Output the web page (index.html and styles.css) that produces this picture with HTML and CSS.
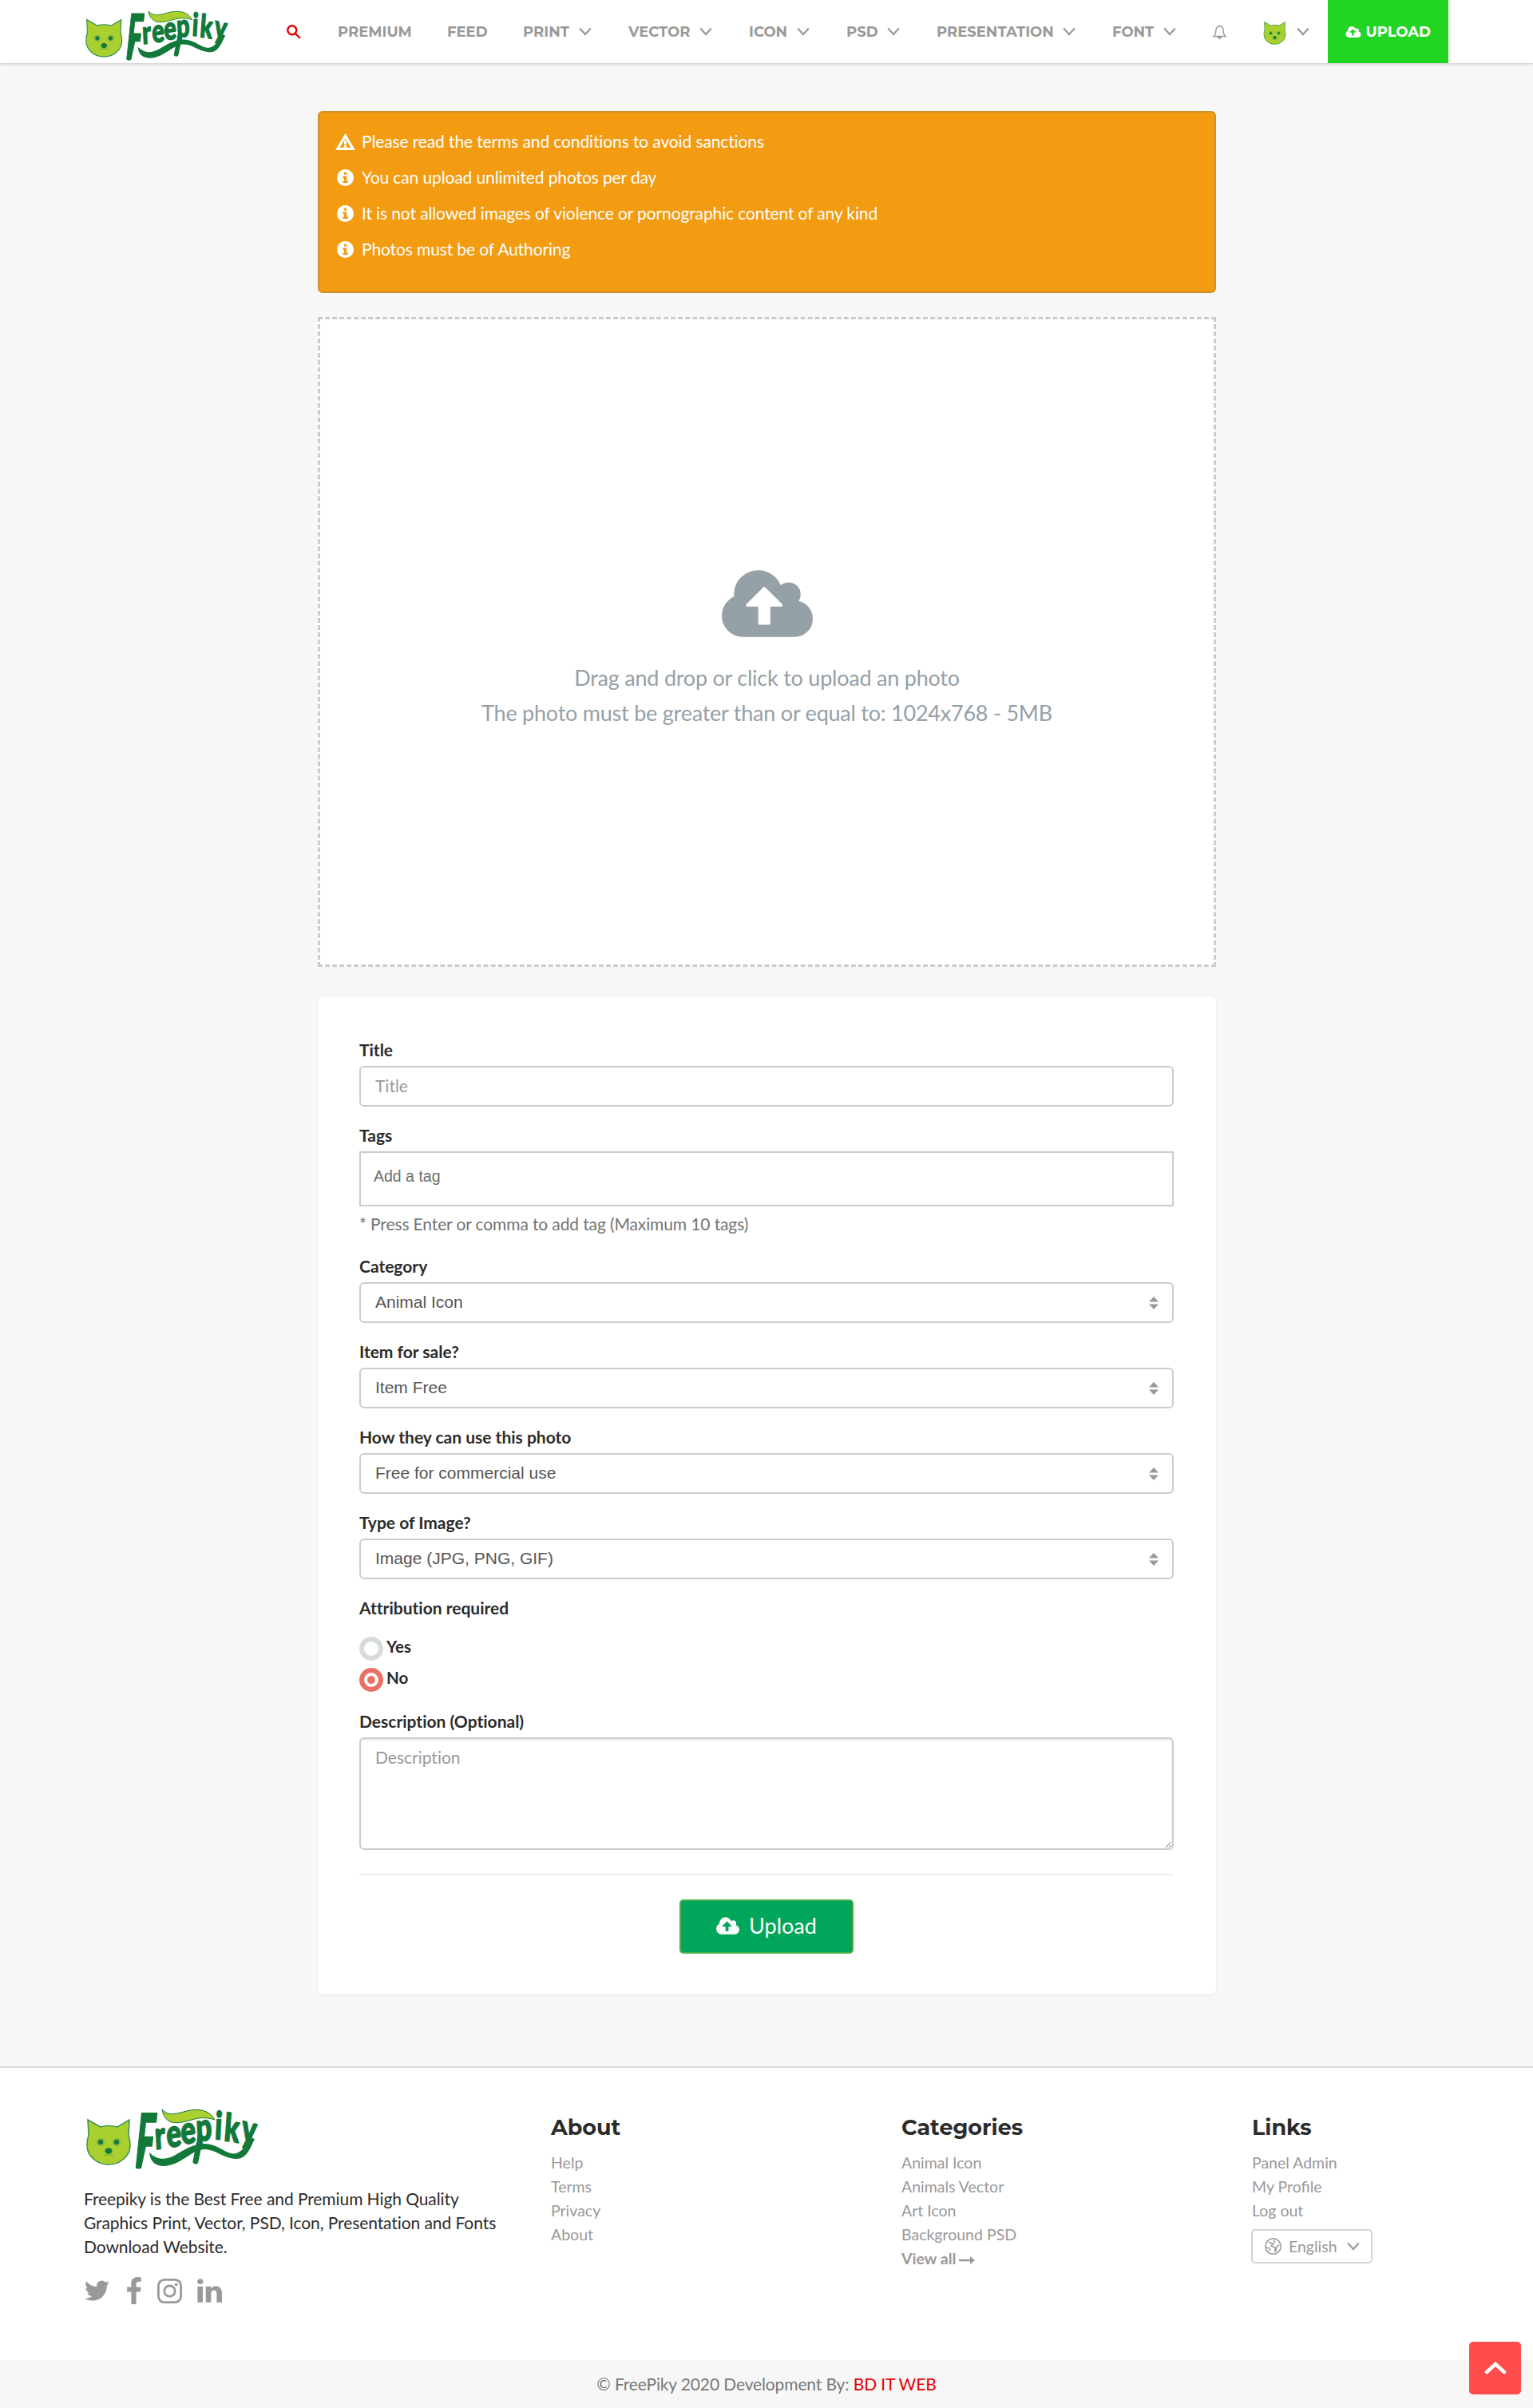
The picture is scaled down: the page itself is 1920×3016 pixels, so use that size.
FILE: index.html
```html
<!DOCTYPE html>
<html lang="en">
<head>
    <meta charset="UTF-8">
    <meta name="viewport" content="width=device-width, initial-scale=1.0">
    <title>Upload - Freepiky</title>
    <link rel="stylesheet" href="styles.css">
</head>
<body>
    <!-- shared icons -->
    <svg class="sprite" xmlns="http://www.w3.org/2000/svg">
        <symbol id="cloud" viewBox="64 128 1920 1408">
            <path d="M1344 864q0-14-9-23L983 489q-9-9-23-9t-23 9L586 840q-10 12-10 24 0 14 9 23t23 9h224v352q0 13 9.5 22.5t22.5 9.5h192q13 0 22.5-9.5t9.5-22.5V896h224q13 0 22.5-9.5t9.5-22.5zm640 288q0 159-112.5 271.5T1600 1536H512q-185 0-316.5-131.5T64 1088q0-130 70-240t188-165q-2-30-2-43 0-212 150-362t362-150q156 0 285.5 87t188.5 231q71-62 166-62 106 0 181 75t75 181q0 76-41 138 130 31 213.5 135.5T1984 1152z"/>
        </symbol>
        <symbol id="chevron" viewBox="0 0 16 11">
            <path d="M1.2 1.5 8 9l6.800-7.500" fill="none" stroke="currentColor" stroke-width="2.200"/>
        </symbol>
        <symbol id="info" viewBox="0 0 21 21">
            <path fill-rule="evenodd" d="M10.500 0a10.500 10.500 0 1 0 0 21 10.500 10.500 0 0 0 0-21zM9 3.800h3.300v3H9zM7.300 8.500h5v6.200H14V17H7.300v-2.300H9v-3.900H7.300z"/>
        </symbol>
        <symbol id="sort" viewBox="0 0 12 16">
            <path d="M6 0l6 6.500H0zM6 16l6-6.500H0z"/>
        </symbol>
        <symbol id="cat" viewBox="0 0 56 58">
            <path class="cat-face" d="M2 1 18 10Q27 7 39 10L54 1 53 20Q55 26 55 33A27 24 0 0 1 1 33Q1 26 3 20Z"/>
            <circle class="cat-ring" cx="18" cy="29" r="5"/>
            <circle class="cat-ring" cx="38" cy="29" r="5"/>
            <circle class="cat-dark" cx="18" cy="29" r="3"/>
            <circle class="cat-dark" cx="38" cy="29" r="3"/>
            <ellipse class="cat-dark" cx="28" cy="40" rx="4.500" ry="3.800"/>
            <path class="cat-mouth" d="M22 45q3 2 6-1 3 3 6 1"/>
        </symbol>
        <symbol id="logo" viewBox="0 0 218 77">
            <use href="#cat" x="0" y="13" width="56" height="58"/>
            <path class="logo-leaf" d="M95 1Q97 14 107 17C125 21 138 6 161 14 154 1 139-1 122 4 108 8 101 8 95 1Z"/>
            <path class="logo-swoosh" d="M79 55C88 64 98 65 110 59 124 51 134 44 148 44 166 44 176 59 188 56 197 53 201 44 205 36L211 38C205 50 201 63 188 63 170 62 163 51 147 51 132 52 118 71 98 72 85 72 80 65 79 55Z"/>
            <g class="logo-text">
                <text class="logo-initial" transform="translate(59 74) skewX(-6) scale(.45 1)">F</text>
                <text transform="scale(.72 1)" x="120 141 166 192 223 239 268" y="51 49 45 41 38 40 40" rotate="-4 -6 -6 -4 4 6 10">reepiky</text>
            </g>
            <path class="logo-stem" d="M143 36 137 66"/>
            <path class="logo-stem" d="M73 40 66 72"/>
        </symbol>
    </svg>

    <header class="navbar">
        <div class="navbar-inner">
            <a class="brand"><svg><use href="#logo"/></svg></a>
            <svg class="search" viewBox="0 0 18 18"><circle cx="6.800" cy="6.800" r="5.500"/><path d="M10.800 10.800 17 17"/></svg>
            <nav class="menu">
                <a>PREMIUM</a>
                <a>FEED</a>
                <a>PRINT <svg class="chev"><use href="#chevron"/></svg></a>
                <a>VECTOR <svg class="chev"><use href="#chevron"/></svg></a>
                <a>ICON <svg class="chev"><use href="#chevron"/></svg></a>
                <a>PSD <svg class="chev"><use href="#chevron"/></svg></a>
                <a>PRESENTATION <svg class="chev"><use href="#chevron"/></svg></a>
                <a>FONT <svg class="chev"><use href="#chevron"/></svg></a>
                <a><svg class="bell" viewBox="0 0 17 19"><path d="M8.500 1.500v1M1 15.500c3-2 2.500-5 3-8.500C4.600 4 6.500 2.700 8.500 2.700S12.400 4 13 7c.5 3.500 0 6.500 3 8.500zM6.500 16.500h4L8.500 18.500z"/></svg></a>
                <a><svg class="avatar"><use href="#cat"/></svg> <svg class="chev"><use href="#chevron"/></svg></a>
                <a class="upload-link"><svg><use href="#cloud"/></svg> UPLOAD</a>
            </nav>
        </div>
    </header>

    <main class="content">
        <div class="alert">
            <p><svg viewBox="0 0 25 21"><path fill-rule="evenodd" d="M12.500 0 25 21H0zM12.500 6.500 5.500 17.800h14zM11 9h3v5h-3zM11 15h3v2.500h-3z"/></svg>Please read the terms and conditions to avoid sanctions</p>
            <p><svg><use href="#info"/></svg>You can upload unlimited photos per day</p>
            <p><svg><use href="#info"/></svg>It is not allowed images of violence or pornographic content of any kind</p>
            <p><svg><use href="#info"/></svg>Photos must be of Authoring</p>
        </div>

        <div class="dropzone">
            <svg><use href="#cloud"/></svg>
            <p>Drag and drop or click to upload an photo</p>
            <p>The photo must be greater than or equal to: 1024x768 - 5MB</p>
        </div>

        <form class="panel">
            <div class="form-group">
                <label>Title</label>
                <input class="form-control" type="text" placeholder="Title">
            </div>
            <div class="form-group">
                <label>Tags</label>
                <div class="tags-input">Add a tag</div>
                <p class="help-block">* Press Enter or comma to add tag (Maximum 10 tags)</p>
            </div>
            <div class="form-group">
                <label>Category</label>
                <div class="select"><select class="form-control"><option>Animal Icon</option></select><svg><use href="#sort"/></svg></div>
            </div>
            <div class="form-group">
                <label>Item for sale?</label>
                <div class="select"><select class="form-control"><option>Item Free</option></select><svg><use href="#sort"/></svg></div>
            </div>
            <div class="form-group">
                <label>How they can use this photo</label>
                <div class="select"><select class="form-control"><option>Free for commercial use</option></select><svg><use href="#sort"/></svg></div>
            </div>
            <div class="form-group">
                <label>Type of Image?</label>
                <div class="select"><select class="form-control"><option>Image (JPG, PNG, GIF)</option></select><svg><use href="#sort"/></svg></div>
            </div>
            <div class="form-group attribution">
                <label>Attribution required</label>
                <div class="radio"><span class="dot"></span><span>Yes</span></div>
                <div class="radio"><span class="dot checked"></span><span>No</span></div>
            </div>
            <div class="form-group">
                <label>Description (Optional)</label>
                <textarea class="form-control" placeholder="Description"></textarea>
            </div>
            <hr>
            <button type="button" class="btn-upload"><svg><use href="#cloud"/></svg>Upload</button>
        </form>
    </main>

    <footer class="footer">
        <div class="footer-inner">
            <div class="footer-about">
                <svg class="footer-logo"><use href="#logo"/></svg>
                <p>Freepiky is the Best Free and Premium High Quality<br>Graphics Print, Vector, PSD, Icon, Presentation and Fonts<br>Download Website.</p>
                <div class="social">
                    <svg class="tw" viewBox="108 256 1577 1280"><path d="M1684 408q-67 98-162 167 1 14 1 42 0 130-38 259.500T1369.500 1125 1185 1335.500t-258 146-323 54.500q-271 0-496-145 35 4 78 4 225 0 401-138-105-2-188-64.500T285 1033q33 5 61 5 43 0 85-11-112-23-185.500-111.500T172 710v-4q68 38 146 41-66-44-105-115t-39-154q0-88 44-163 121 149 294.500 238.500T884 653q-8-38-8-74 0-134 94.500-228.500T1199 256q140 0 236 102 109-21 205-78-37 115-142 178 93-10 186-50z"/></svg>
                    <svg class="fb" viewBox="479 0 864 1664"><path d="M1343 12v264h-157q-86 0-116 36t-30 108v189h293l-39 296h-254v759H734V905H479V609h255V391q0-186 104-288.500T1115 0q147 0 228 12z"/></svg>
                    <svg class="ig" viewBox="0 0 31 31"><rect x="1.400" y="1.400" width="28.200" height="28.200" rx="7.500"/><circle cx="15.500" cy="15.500" r="6.700"/><circle class="ig-dot" cx="23.700" cy="7.300" r="1.900"/></svg>
                    <svg class="li" viewBox="128 148 1536 1468"><path d="M477 625v991H147V625h330zm21-306q1 73-50.500 122T312 490h-2q-82 0-132-49t-50-122q0-74 51.500-122.500T314 148t133 48.500T498 319zm1166 729v568h-329v-530q0-105-40.500-164.500T1168 862q-63 0-105.500 34.500T999 982q-11 30-11 81v553H659q2-399 2-647t-1-296l-1-48h329v144h-2q20-32 41-56t56.500-52 87-43.500T1285 602q171 0 275 113.500t104 332.500z"/></svg>
                </div>
            </div>
            <div class="footer-col">
                <h4>About</h4>
                <a>Help</a>
                <a>Terms</a>
                <a>Privacy</a>
                <a>About</a>
            </div>
            <div class="footer-col">
                <h4>Categories</h4>
                <a>Animal Icon</a>
                <a>Animals Vector</a>
                <a>Art Icon</a>
                <a>Background PSD</a>
                <a><strong>View all</strong><svg class="arrow" viewBox="0 0 20 10"><path d="M0 3.700h14V0l6 5-6 5V6.300H0z"/></svg></a>
            </div>
            <div class="footer-col">
                <h4>Links</h4>
                <a>Panel Admin</a>
                <a>My Profile</a>
                <a>Log out</a>
                <div class="lang">
                    <svg class="globe" viewBox="0 0 21 21"><circle cx="10.500" cy="10.500" r="9.700"/><path d="M5 5.500 11 7.500 8 10l5 2v6M11 3l2 3M18 8l-3.500 4-1 5M2 12l4 1v3"/></svg>
                    <span>English</span>
                    <svg class="chev"><use href="#chevron"/></svg>
                </div>
            </div>
        </div>
        <div class="copyright">© FreePiky 2020 Development By: <a>BD IT WEB</a></div>
    </footer>

    <a class="to-top"><svg viewBox="0 0 28 17"><path d="M3 14 14 4l11 10"/></svg></a>
</body>
</html>
```
FILE: styles.css
```css
* {
    box-sizing: border-box;
}
body {
    margin: 0;
    font-family: Lato, "Liberation Sans", sans-serif;
    font-size: 21px;
    line-height: 30px;
    color: #2b2b2b;
    background: #f7f7f7;
}
p {
    margin: 0;
}
svg {
    fill: currentColor;
    flex: none;
}
svg, symbol {
    overflow: visible;
}
.sprite {
    position: absolute;
    width: 0;
    height: 0;
}

/* logo */
.cat-face {
    fill: #a9d02f;
    stroke: #3a9157;
    stroke-width: 1.5px;
}
.cat-ring {
    fill: #7db846;
}
.cat-dark {
    fill: #12793a;
}
.cat-mouth {
    fill: none;
    stroke: #5fa040;
}
.logo-leaf {
    fill: #a9d02f;
    stroke: #12793a;
    stroke-width: 1px;
}
.logo-swoosh {
    fill: #12793a;
}
.logo-text {
    fill: #12793a;
    stroke: #12793a;
    stroke-width: 1.8px;
    stroke-linejoin: round;
    font-family: Lato, sans-serif;
    font-size: 48px;
    font-weight: 900;
}
.logo-initial {
    font-size: 94px;
}
.logo-stem {
    fill: none;
    stroke: #12793a;
    stroke-width: 7px;
    stroke-linecap: round;
}

/* navbar */
.navbar {
    height: 80px;
    background: #fff;
    border-bottom: 1px solid #dadada;
    box-shadow: 0 1px 3px rgba(0,0,0,0.12);
}
.navbar-inner {
    display: flex;
    align-items: center;
    width: 1710px;
    height: 79px;
    margin: 0 auto;
}
.brand {
    display: flex;
    width: 254px;
    padding: 10px 0 0 2px;
}
.brand svg {
    width: 181px;
    height: 64px;
}
.search {
    width: 18px;
    height: 18px;
    margin-right: 23px;
    fill: none;
    stroke: #e60000;
    stroke-width: 2.4px;
}
.menu {
    display: grid;
    grid-template-columns: 137px 95px 132px 151px 122px 113px 220px 126px 62px 105px 151px;
    height: 79px;
    font-family: Montserrat, Inter, sans-serif;
    font-size: 18px;
    font-weight: 700;
    color: #999;
}
.menu a {
    display: flex;
    align-items: center;
    justify-content: space-between;
    padding: 0 23px;
}
.chev {
    width: 16px;
    height: 11px;
}
.bell {
    width: 17px;
    height: 19px;
    fill: none;
    stroke: #999;
    stroke-width: 1.4px;
}
.avatar {
    width: 31px;
    height: 29px;
    margin-top: 4px;
}
.menu .upload-link {
    padding: 0 22px;
    background: #22d522;
    color: #fff;
}
.upload-link svg {
    width: 20px;
    height: 14px;
}

/* content */
.content {
    width: 1125px;
    margin: 59px auto 90px 398px;
}
.alert {
    height: 228px;
    padding: 21px 20px;
    background: #f39c12;
    border: 2px solid #cf9027;
    border-radius: 6px;
    color: #fff;
    letter-spacing: -0.12px;
}
.alert p {
    display: flex;
    align-items: center;
    margin-bottom: 15px;
}
.alert svg {
    width: 25px;
    height: 21px;
    margin-right: 8px;
}
.dropzone {
    display: flex;
    flex-direction: column;
    align-items: center;
    height: 814px;
    margin: 30px 0 38px;
    padding-top: 314px;
    background: #fff;
    border: 3px dashed #ccc;
    color: #95a0a7;
    font-size: 27px;
    line-height: 44px;
    letter-spacing: -0.23px;
}
.dropzone svg {
    width: 114px;
    height: 84px;
    margin-bottom: 29px;
}
.panel {
    height: 1249px;
    padding: 52px 53px 0 52px;
    background: #fff;
    border-radius: 6px;
    box-shadow: 0 1px 2px rgba(0,0,0,0.08);
}
.form-group {
    margin-bottom: 22px;
}
.form-group label {
    display: block;
    height: 26px;
    margin-bottom: 8px;
    line-height: 27px;
    font-weight: 700;
    font-variant-ligatures: none;
}
.form-control {
    display: block;
    width: 100%;
    height: 51px;
    padding: 0 18px 2px;
    border: 2px solid #ccc;
    border-radius: 6px;
    background: #fff;
    color: #555;
    font-family: Lato, sans-serif;
    font-size: 21px;
    font-variant-ligatures: none;
    outline: none;
}
.form-control::placeholder {
    color: #999;
}
select.form-control {
    appearance: none;
    font-family: "Liberation Sans", Arial, sans-serif;
}
.tags-input {
    height: 69px;
    padding: 14px 16px;
    border: 2px solid #ccc;
    color: #6d6d6d;
    font-family: "Liberation Sans", Arial, sans-serif;
    font-size: 19.5px;
}
.help-block {
    padding-top: 7px;
    height: 39px;
    color: #737373;
    letter-spacing: -0.12px;
}
.select {
    display: grid;
    align-items: center;
}
.select > * {
    grid-area: 1 / 1;
}
.select svg {
    justify-self: end;
    width: 12px;
    height: 16px;
    margin-right: 19px;
    color: #999;
}
.attribution {
    height: 120px;
}
.radio {
    display: flex;
    gap: 4px;
    height: 39px;
    font-weight: 700;
}
.attribution label + .radio {
    margin-top: 24px;
}
.radio span:last-child {
    margin-top: -3px;
    font-size: 20.5px;
}
.dot {
    width: 30px;
    height: 30px;
    border: 6px solid #d6dbdd;
    border-radius: 50%;
}
.dot.checked {
    border-color: #ea6f66;
    background: radial-gradient(#ea6f66 4.5px, #fff 5.5px);
}
textarea.form-control {
    height: 141px;
    padding: 8px 18px;
    line-height: 30px;
    box-shadow: inset 0 2px 2px rgba(0,0,0,0.075);
}
hr {
    height: 2px;
    margin: 30px 0;
    border: 0;
    background: #eee;
}
.btn-upload {
    display: flex;
    align-items: center;
    justify-content: center;
    gap: 12px;
    width: 218px;
    height: 68px;
    margin: 0 auto;
    padding-bottom: 4px;
    border: 2px solid #4cae4c;
    border-radius: 5px;
    background: #00a65a;
    color: #fff;
    font-family: Lato, sans-serif;
    font-size: 27px;
}
.btn-upload svg {
    width: 29px;
    height: 22px;
}

/* footer */
.footer {
    background: #fff;
    border-top: 2px solid #dadada;
}
.footer-inner {
    display: grid;
    grid-template-columns: 585px 439px 439px 247px;
    width: 1710px;
    height: 366px;
    margin: 0 auto;
    padding-top: 51px;
}
.footer-about p {
    letter-spacing: -0.08px;
}
.footer-logo {
    display: block;
    width: 218px;
    height: 77px;
    margin: 0 0 21px 3px;
}
.social {
    display: flex;
    align-items: center;
    margin-top: 23px;
    padding-left: 1px;
    color: #999;
}
.tw {
    width: 31px;
    height: 26px;
}
.fb {
    width: 18px;
    height: 34px;
    margin: 0 20px 0 22px;
}
.ig {
    width: 31px;
    height: 31px;
    margin-right: 19px;
    fill: none;
    stroke: #999;
    stroke-width: 2.8px;
}
.ig-dot {
    fill: #999;
    stroke: none;
}
.li {
    width: 31px;
    height: 30px;
}
.footer-col {
    color: #999;
    font-size: 19.5px;
}
.footer-col h4 {
    margin: 9px 0 14px;
    color: #2b2b2b;
    font-family: Montserrat, Inter, sans-serif;
    font-size: 27px;
    line-height: 30px;
    font-weight: 700;
}
.footer-col a {
    display: block;
}
.arrow {
    width: 20px;
    height: 10px;
    margin-left: 4px;
}
.lang {
    display: flex;
    align-items: center;
    width: 152px;
    height: 43px;
    margin-top: 8px;
    margin-left: -1px;
    padding: 0 14px 0 15px;
    border: 2px solid #d5d5d5;
    border-radius: 5px;
}
.lang span {
    margin: 1px auto 0 9px;
}
.globe {
    width: 21px;
    height: 21px;
    fill: none;
    stroke: #999;
    stroke-width: 1.5px;
}
.copyright {
    height: 60px;
    line-height: 59px;
    background: #f7f7f7;
    color: #777;
    text-align: center;
    letter-spacing: -0.13px;
}
.copyright a {
    color: #e60000;
}
.to-top {
    position: fixed;
    right: 15px;
    bottom: 17px;
    display: flex;
    align-items: center;
    justify-content: center;
    width: 65px;
    height: 66px;
    border-radius: 5px;
    background: #ff4c4c;
}
.to-top svg {
    width: 28px;
    height: 17px;
    margin-bottom: 2px;
    fill: none;
    stroke: #fff;
    stroke-width: 4.5px;
    stroke-linecap: round;
}
```
